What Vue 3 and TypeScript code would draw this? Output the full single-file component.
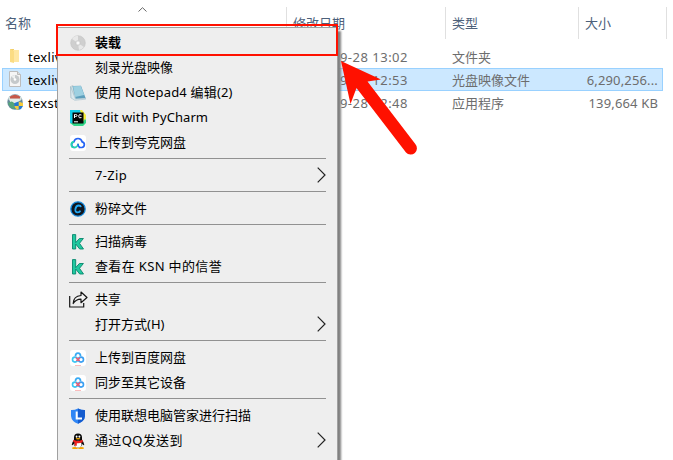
<script setup lang="ts">
interface FileRow {
  icon: string
  name: string
  date: string
  type: string
  size: string
  selected?: boolean
}

interface MenuItem {
  label: string
  icon?: string
  cls?: string
  submenu?: boolean
}

const files: FileRow[] = [
  { icon: 'folder', name: 'texliv', date: '9-28 13:02', type: '文件夹', size: '' },
  { icon: 'iso', name: 'texliv', date: '9-28 12:53', type: '光盘映像文件', size: '6,290,256...', selected: true },
  { icon: 'setup', name: 'texst', date: '9-28 12:48', type: '应用程序', size: '139,664 KB' },
]

const groups: MenuItem[][] = [
  [
    { label: '装载', icon: 'disc', cls: 'bold' },
    { label: '刻录光盘映像' },
    { label: '使用 Notepad4 编辑(2)', icon: 'notepad', cls: 'mixed' },
    { label: 'Edit with PyCharm', icon: 'pycharm', cls: 'latin' },
    { label: '上传到夸克网盘', icon: 'quark' },
  ],
  [{ label: '7-Zip', submenu: true, cls: 'roomy' }],
  [{ label: '粉碎文件', icon: 'shred' }],
  [
    { label: '扫描病毒', icon: 'kasper' },
    { label: '查看在 KSN 中的信誉', icon: 'kasper', cls: 'roomy' },
  ],
  [
    { label: '共享', icon: 'share' },
    { label: '打开方式(H)', submenu: true },
  ],
  [
    { label: '上传到百度网盘', icon: 'baidu' },
    { label: '同步至其它设备', icon: 'baidu' },
  ],
  [
    { label: '使用联想电脑管家进行扫描', icon: 'shield' },
    { label: '通过QQ发送到', icon: 'qq', submenu: true, cls: 'roomy' },
  ],
]
</script>

<template>
  <main class="window">
    <svg class="sort" viewBox="0 0 9 5"><path d="M.5 4.5 4.5.7l4 3.8" fill="none" stroke="#666" /></svg>
    <header class="columns">
      <span class="col name">名称</span>
      <span class="col date">修改日期</span>
      <span class="col type">类型</span>
      <span class="col size">大小</span>
    </header>
    <section class="files">
      <div v-for="(f, i) in files" :key="i" class="file" :class="{ selected: f.selected }">
        <span class="ficon">
          <svg v-if="f.icon === 'folder'" viewBox="0 0 16 16">
            <path d="M3 1h4v13H3z" fill="#f2cf68" /><path d="M6 2h6v12H6z" fill="#ffe7a2" /><path d="M3 1l4 2v12l-4-1z" fill="#fbdc83" />
          </svg>
          <svg v-else-if="f.icon === 'iso'" viewBox="0 0 16 16">
            <path d="M2.500.5h8l3 3v12h-11z" fill="#f5f5f5" stroke="#bcbcbc" /><path d="M10.500.5v3h3" fill="#ddd" stroke="#bbb" />
            <circle cx="8" cy="8.500" r="4.500" fill="#c5c9cb" /><path d="M8 8.500 4.500 5.700A4.500 4.500 0 0 1 8 4z" fill="#eef0f0" /><circle cx="8" cy="8.500" r="1.300" fill="#fff" />
          </svg>
          <svg v-else viewBox="0 0 16 16">
            <circle cx="8" cy="8" r="7.700" fill="#65899b" /><path d="M1 5a8 8 0 0 1 14 0l-2 2H3z" fill="#d9e3df" />
            <path d="M3 2.500Q8-1 13 2.500v2H3z" fill="#c6594b" /><path d="M3 5h9v4H3z" fill="#e7eee9" />
            <path d="M1 9q4-3 6 0l1 6q-5 0-7-6z" fill="#55a57a" />
            <path d="M11.500 7.500 16 9v3q-1 3-4.500 4Q8 15 7.500 12V9z" fill="#2479d2" />
            <path d="M11.700 7.500 16 9v3h-4.300zM7.500 12h4.200v4Q8 15 7.500 12z" fill="#f6cb3c" />
          </svg>
        </span>
        <span class="fname">{{ f.name }}</span>
        <span class="fdate">{{ f.date }}</span>
        <span class="ftype">{{ f.type }}</span>
        <span class="fsize">{{ f.size }}</span>
      </div>
    </section>

    <nav class="menu">
      <div v-for="(g, gi) in groups" :key="gi" class="group">
        <div v-for="m in g" :key="m.label" class="item" :class="m.cls">
          <span class="icon">
            <svg v-if="m.icon === 'disc'" viewBox="0 0 16 16">
              <circle cx="8" cy="8" r="7.300" fill="#cfcfcf" stroke="#c2c2c2" stroke-width=".6" />
              <path d="M8 8 2 4A7.200 7.200 0 0 1 8 .8zM8 8l6 4a7.200 7.200 0 0 1-5 3z" fill="#e8e8e8" />
              <circle cx="8" cy="8" r="2.400" fill="#e9e9e9" stroke="#bbb" stroke-width=".5" /><circle cx="8" cy="8" r="1" fill="#fff" />
            </svg>
            <svg v-else-if="m.icon === 'notepad'" viewBox="0 0 16 16">
              <path d="M.5 1.500 3 .5 4 12l-3 1z" fill="#d8e3e6" stroke="#a7b7bd" stroke-width=".5" />
              <path d="M2.500 1 11 .8l4.700 12.500-10 .7z" fill="#5d9fbc" /><path d="M3 1.200 10.800 1l3.400 9-9 2z" fill="#9dd0e1" />
              <path d="M.7 1.800 5.300 13.800l10.300-.6v1L4.800 15.300 1 12.800z" fill="#dce9ed" stroke="#84aabb" stroke-width=".4" />
            </svg>
            <svg v-else-if="m.icon === 'pycharm'" viewBox="0 0 16 16">
              <path d="M0 0h10l4 4v8L4 13H0z" fill="#12cbe6" /><path d="M10 0h2l4 5v4l-3 3z" fill="#f6ed3d" /><path d="M0 13h12l3-4 1 1v3l-3 3H4z" fill="#31d789" />
              <path d="M2.500 2.500h11v11h-11z" fill="#050505" /><path d="M4 11.800h4" stroke="#fff" />
              <path d="M4.500 8V4.500h1.200q1.300 0 1.300 1t-1.300 1H4.500M11.500 5q-2.800-1.300-2.800 1.200T11.500 7.600" fill="none" stroke="#fff" />
            </svg>
            <svg v-else-if="m.icon === 'quark'" viewBox="0 0 16 16">
              <rect width="16" height="16" rx="3" fill="#fff" />
              <path d="M5.500 12.500H4.200A2.900 2.900 0 0 1 3.900 6.800 4.200 4.200 0 0 1 12.100 6.800a2.900 2.900 0 0 1-.3 5.700H8.700" fill="none" stroke="#2564f4" stroke-width="1.700" />
              <path d="M4 6.900a2.800 2.800 0 0 0 .2 5.600q3.500 0 3.800-3.700" fill="none" stroke="#24d6ae" stroke-width="1.700" />
              <path d="M8 8.700q.3 3.200 2 3.800" fill="none" stroke="#2564f4" stroke-width="1.500" />
            </svg>
            <svg v-else-if="m.icon === 'shred'" viewBox="0 0 16 16">
              <circle cx="8" cy="8" r="7.200" fill="#10151d" stroke="#168cdf" stroke-width="1.300" />
              <path d="M10.900 6.200Q10.700 4.500 8.800 4.500 6 4.500 5.400 8q-.5 3.400 2.200 3.400 2.100 0 2.800-1.800" fill="none" stroke="#20a8f4" stroke-width="1.800" />
            </svg>
            <svg v-else-if="m.icon === 'kasper'" viewBox="0 0 16 16">
              <path d="M2.500.6h3.200v8L9.400 4.500h4L9.500 9.300l4 5.700H9.700l-4-5v5H2.500z" fill="#20c9a0" stroke="#07866c" stroke-width=".9" />
            </svg>
            <svg v-else-if="m.icon === 'share'" class="wide" viewBox="0 0 19 17">
              <path d="M.7 5v11h14v-4" fill="none" stroke="#151515" stroke-width="1.200" />
              <path d="M4.200 12.500Q4.500 5 12 4.500V1l6 5.500-6 5.200V8.200Q7.300 8 4.200 12.500z" fill="#f4f4f4" stroke="#151515" stroke-width="1.200" stroke-linejoin="round" />
            </svg>
            <svg v-else-if="m.icon === 'baidu'" viewBox="0 0 16 16">
              <rect width="16" height="16" rx="3" fill="#fff" />
              <circle cx="5" cy="9.600" r="2.500" fill="none" stroke="#39c5f4" stroke-width="1.600" />
              <circle cx="11" cy="9.600" r="2.500" fill="none" stroke="#399ff2" stroke-width="1.600" />
              <path d="M5.600 6.300a2.500 2.500 0 1 1 4.800 0" fill="none" stroke="#39aaf4" stroke-width="1.800" />
              <path d="m6 7.500 3.500 3.600M10 7.500l-3.500 3.600" stroke="#f25b73" stroke-width="1.500" />
              <path d="M5 15.600h6" stroke="#f7a1a1" stroke-width=".8" />
            </svg>
            <svg v-else-if="m.icon === 'shield'" viewBox="0 0 16 16">
              <path d="M8 .5q3.500 1.800 7 1.600v6Q14.500 13.500 8 15.700 1.500 13.500 1 8V2.100Q4.500 2.300 8 .5z" fill="#2f86f5" />
              <path d="M8 .5q3.500 1.800 7 1.600v6Q14.500 13.500 8 15.700z" fill="#155ccf" /><path d="M6.700 3.500v7H12" fill="none" stroke="#fff" stroke-width="2" />
            </svg>
            <svg v-else-if="m.icon === 'qq'" viewBox="0 0 16 16">
              <ellipse cx="5" cy="15" rx="3" ry="1.100" fill="#f5a400" /><ellipse cx="11" cy="15" rx="3" ry="1.100" fill="#f5a400" />
              <path d="M4 7V4.500a4 4 0 0 1 8 0V7q2 2 2.300 5-1 .5-2-1-.8 3.500-4.300 3.500T3.700 11q-1 1.500-2 1Q2 9 4 7z" fill="#080808" />
              <ellipse cx="8" cy="11.200" rx="3.500" ry="3.400" fill="#fff" />
              <ellipse cx="6.600" cy="3.600" rx=".9" ry="1.200" fill="#fff" /><ellipse cx="9.400" cy="3.600" rx=".9" ry="1.200" fill="#fff" />
              <ellipse cx="8" cy="5.800" rx="2.300" ry=".7" fill="#f8aa00" /><path d="M3.300 6.800Q8 9 12.700 6.800v2.500Q9.500 10.600 6.800 10.200v2.500H4.600V9.600l-1.300-.6z" fill="#ef2020" />
            </svg>
          </span>
          <span class="label">{{ m.label }}</span>
          <svg v-if="m.submenu" class="chev" viewBox="0 0 9 16"><path d="M.7.7 8 8 .7 15.300" fill="none" stroke="#222" stroke-width="1.200" /></svg>
        </div>
      </div>
    </nav>
    <div class="highlight"></div>
    <svg class="arrow" viewBox="0 0 80 104">
      <path d="M1 1 41 19.500 27.500 21.500 75.300 84A6 6 0 0 1 66 92.500L16.500 28 10.500 44z" fill="#ff1100" />
    </svg>
  </main>
</template>

<style>
body { background: #fff; overflow: hidden; }
</style>

<style scoped>
.window {
  position: relative; box-sizing: border-box; width: 673px; height: 460px; padding-top: 7px;
  overflow: hidden; background: #fff; color: #000;
  font: 13px/23px "Noto Sans", "Noto Sans CJK SC", sans-serif;
}
svg { display: block; }
.sort { position: absolute; left: 138px; top: 7px; width: 9px; height: 5px; }
.columns { display: grid; grid-template-columns: 287px 159px 133px 88px; height: 31px; color: #4c607a; }
.col { border-right: 1px solid #e0e0e0; padding-left: 6px; line-height: 32px; }
.col.name { padding-left: 5px; }
.files { padding: 7px 10px 0 2px; }
.file {
  box-sizing: border-box; display: grid; grid-template-columns: 290px 159px 130px 76px;
  height: 23px; border: 1px solid transparent; color: #6d6d6d; line-height: 22px;
}
.file.selected { background: #cce8ff; border-color: #99d1ff; }
.ficon { display: block; grid-column: 1; grid-row: 1; padding: 2px 0 0 4px; }
.ficon svg { width: 16px; height: 16px; }
.fname { grid-column: 1; grid-row: 1; padding-left: 25px; color: #000; letter-spacing: .3px; }
.fdate { grid-column: 2; grid-row: 1; width: 115px; text-align: right; white-space: nowrap; letter-spacing: .5px; }
.ftype { grid-column: 3; grid-row: 1; }
.fsize { grid-column: 4; grid-row: 1; text-align: right; letter-spacing: .15px; }
.menu {
  position: absolute; left: 57px; top: 27px; box-sizing: border-box; width: 281px; height: 445px;
  padding: 2px 11px 0; background: #eee; border: 1px solid #a0a0a0;
  box-shadow: 3px 4px 2px #808080;
}
.group + .group { border-top: 1px solid #919191; margin-top: 3px; padding-top: 4px; }
.item { display: flex; align-items: center; height: 25px; white-space: nowrap; }
.icon { width: 26px; }
.icon svg { width: 16px; height: 16px; margin-left: 1px; }
.icon svg.wide { width: 19px; height: 17px; margin-left: 0; }
.label { line-height: 25px; }
.bold .label { font-weight: 700; }
.mixed .label { letter-spacing: .19px; }
.latin .label { letter-spacing: .07px; }
.roomy .label { letter-spacing: .35px; }
.chev { width: 9px; height: 16px; margin: -2px 0 0 auto; }
.highlight { position: absolute; left: 56px; top: 24px; box-sizing: border-box; width: 282px; height: 32px; border: 2px solid #ff1100; }
.arrow { position: absolute; left: 340px; top: 60px; width: 80px; height: 104px; }
</style>
